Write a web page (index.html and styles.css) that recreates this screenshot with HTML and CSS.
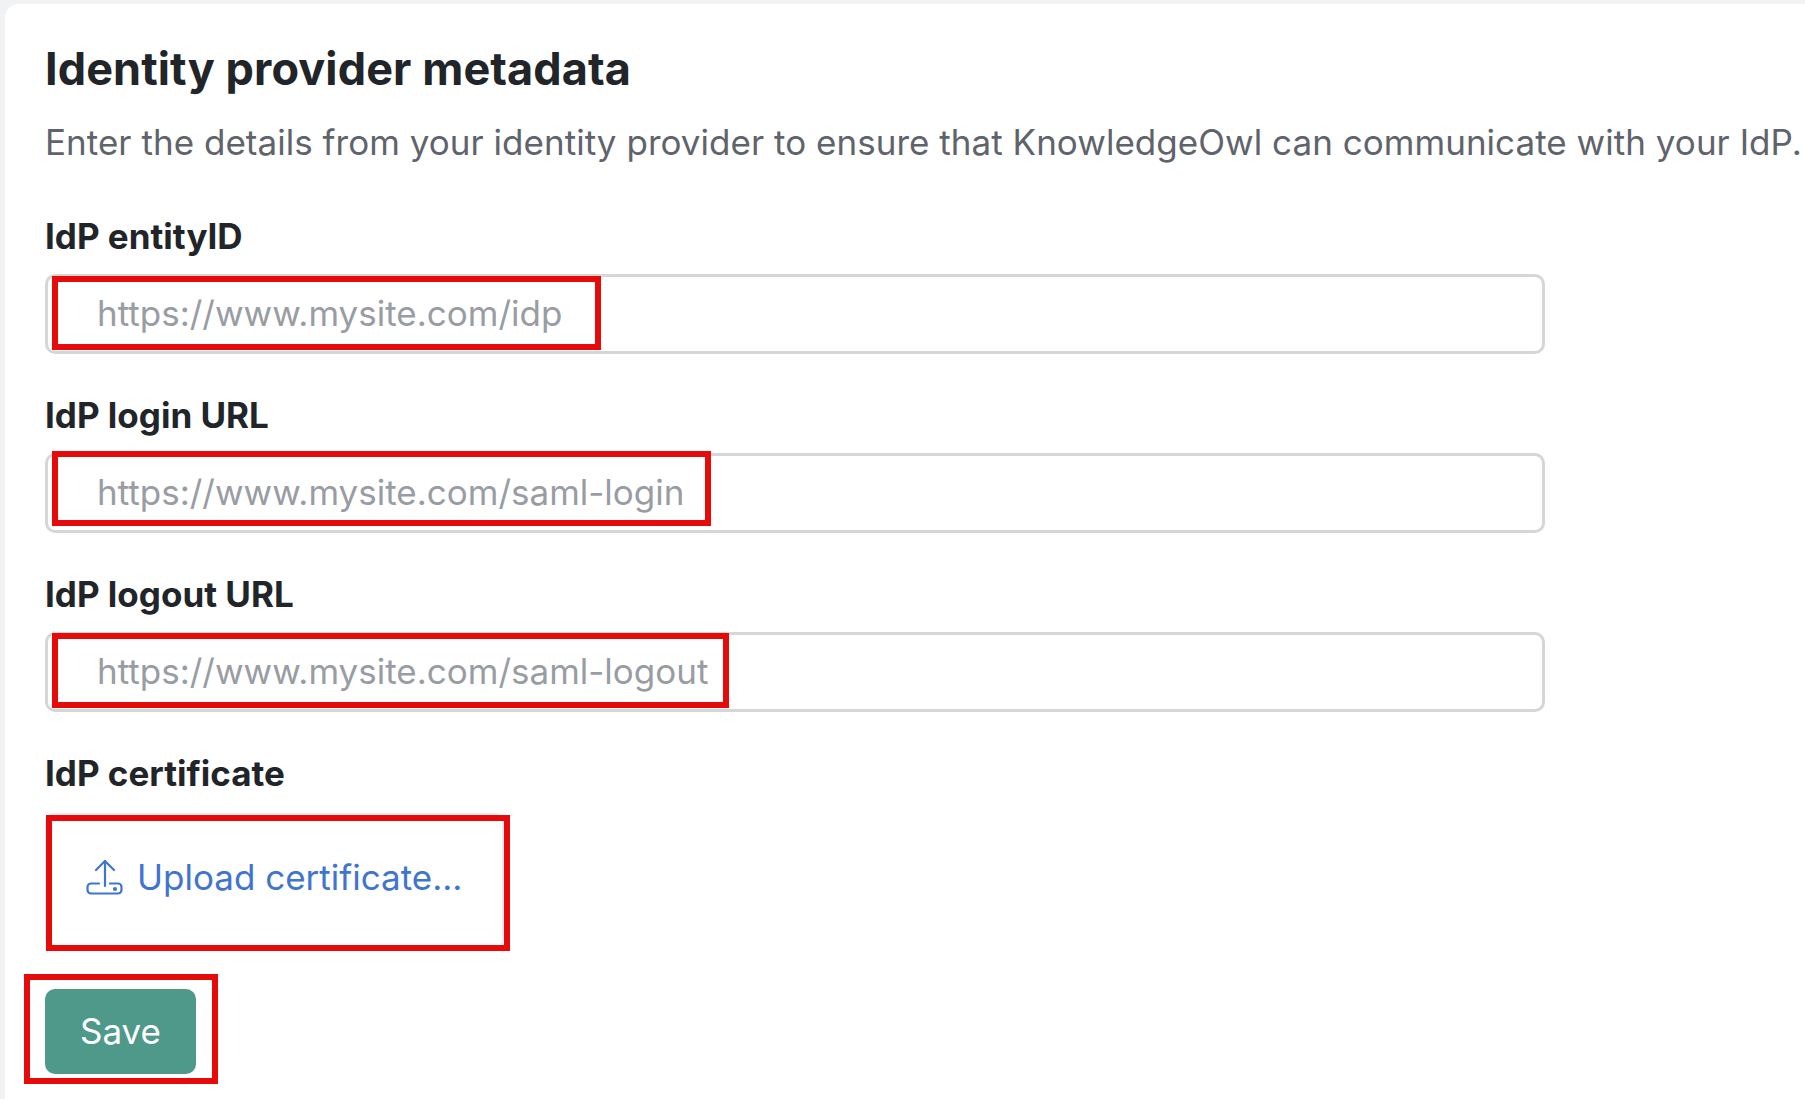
FILE: index.html
```html
<!doctype html>
<html lang="en">
<head>
    <meta charset="utf-8">
    <title>Identity provider metadata</title>
    <link rel="stylesheet" href="styles.css">
</head>
<body>
    <div class="card">
        <h1>Identity provider metadata</h1>
        <p class="intro">Enter the details from your identity provider to ensure that KnowledgeOwl can communicate with your IdP.</p>

        <div class="field">
            <label for="entity_id">IdP entityID</label>
            <div class="input-wrap">
                <input type="text" id="entity_id" placeholder="https://www.mysite.com/idp">
                <span class="mark mark-entity"></span>
            </div>
        </div>

        <div class="field">
            <label for="login_url">IdP login URL</label>
            <div class="input-wrap">
                <input type="text" id="login_url" placeholder="https://www.mysite.com/saml-login">
                <span class="mark mark-login"></span>
            </div>
        </div>

        <div class="field">
            <label for="logout_url">IdP logout URL</label>
            <div class="input-wrap">
                <input type="text" id="logout_url" placeholder="https://www.mysite.com/saml-logout">
                <span class="mark mark-logout"></span>
            </div>
        </div>

        <div class="field field-cert">
            <label>IdP certificate</label>
            <div class="upload">
                <a class="upload-link" href="#">
                    <svg class="upload-icon" viewBox="0 0 37 36" fill="none" stroke="currentColor" stroke-width="2.2" stroke-linecap="round" stroke-linejoin="round">
                        <path d="M19 27V2"/>
                        <path d="M10 11l9-9 9 9"/>
                        <path d="M13 24.5H5a3.5 3.5 0 0 0-3.5 3.5v3a3.5 3.5 0 0 0 3.5 3.5h27a3.5 3.5 0 0 0 3.5-3.5v-3a3.5 3.5 0 0 0-3.5-3.5h-8"/>
                        <circle cx="29" cy="30" r="1" fill="currentColor"/>
                    </svg>
                    Upload certificate...
                </a>
                <span class="mark mark-upload"></span>
            </div>
        </div>

        <div class="save-wrap">
            <button class="save">Save</button>
            <span class="mark mark-save"></span>
        </div>
    </div>
</body>
</html>
```

FILE: styles.css
```css
body {
    font-family: Inter, "Liberation Sans", sans-serif;
    margin: 0;
    background: #f1f2f4;
    overflow: hidden;
}
.card {
    background: #fff;
    margin: 4px 0 0 5px;
    padding: 41px 0 0 40px;
    border-top-left-radius: 14px;
    height: 1095px;
    box-sizing: border-box;
}
h1 {
    margin: 0;
    font-size: 45px;
    line-height: 48px;
    font-weight: 700;
    letter-spacing: 0.1px;
    color: #212529;
}
.intro {
    margin: 25px 0 52px;
    font-size: 35px;
    line-height: 48px;
    letter-spacing: 0.03px;
    color: #5f646c;
    white-space: nowrap;
}
.field {
    margin-bottom: 43px;
}
label {
    display: block;
    font-size: 35px;
    line-height: 36px;
    font-weight: 700;
    color: #212529;
    margin-bottom: 20px;
}
.input-wrap {
    position: relative;
    width: 1500px;
}
input {
    display: block;
    width: 100%;
    height: 80px;
    box-sizing: border-box;
    border: 3px solid #d6d6d6;
    border-radius: 10px;
    padding: 0 49px 2px;
    font-family: inherit;
    font-size: 35px;
    outline: none;
}
input::placeholder {
    color: #999da3;
    opacity: 1;
}
.field-cert {
    margin-bottom: 40px;
}
.field-cert label {
    margin-bottom: 22px;
}
.upload {
    position: relative;
    width: 459px;
    height: 136px;
    box-sizing: border-box;
    border: 2px solid #eeeeee;
    border-radius: 10px;
    display: flex;
    align-items: center;
    padding-left: 39px;
}
.upload-link {
    display: flex;
    align-items: center;
    gap: 14px;
    font-size: 35px;
    color: #3f75cf;
    text-decoration: none;
    margin-top: -9px;
}
.upload-icon {
    width: 37px;
    height: 36px;
    margin-top: 1px;
}
.save-wrap {
    position: relative;
    width: 151px;
}
.save {
    display: block;
    width: 151px;
    height: 85px;
    border: 0;
    border-radius: 10px;
    background: #4f998a;
    color: #fff;
    font-family: inherit;
    font-size: 35px;
    padding-bottom: 2px;
}
.mark {
    position: absolute;
    border: 6px solid #e60a0a;
    box-sizing: border-box;
    pointer-events: none;
}
.mark-entity {
    left: 7px;
    top: 2px;
    width: 549px;
    height: 74px;
}
.mark-login {
    left: 7px;
    top: -2px;
    width: 659px;
    height: 75px;
}
.mark-logout {
    left: 7px;
    top: 1px;
    width: 677px;
    height: 75px;
}
.mark-upload {
    left: -1px;
    top: 0;
    width: 464px;
    height: 136px;
}
.mark-save {
    left: -21px;
    top: -15px;
    width: 194px;
    height: 110px;
}
```
